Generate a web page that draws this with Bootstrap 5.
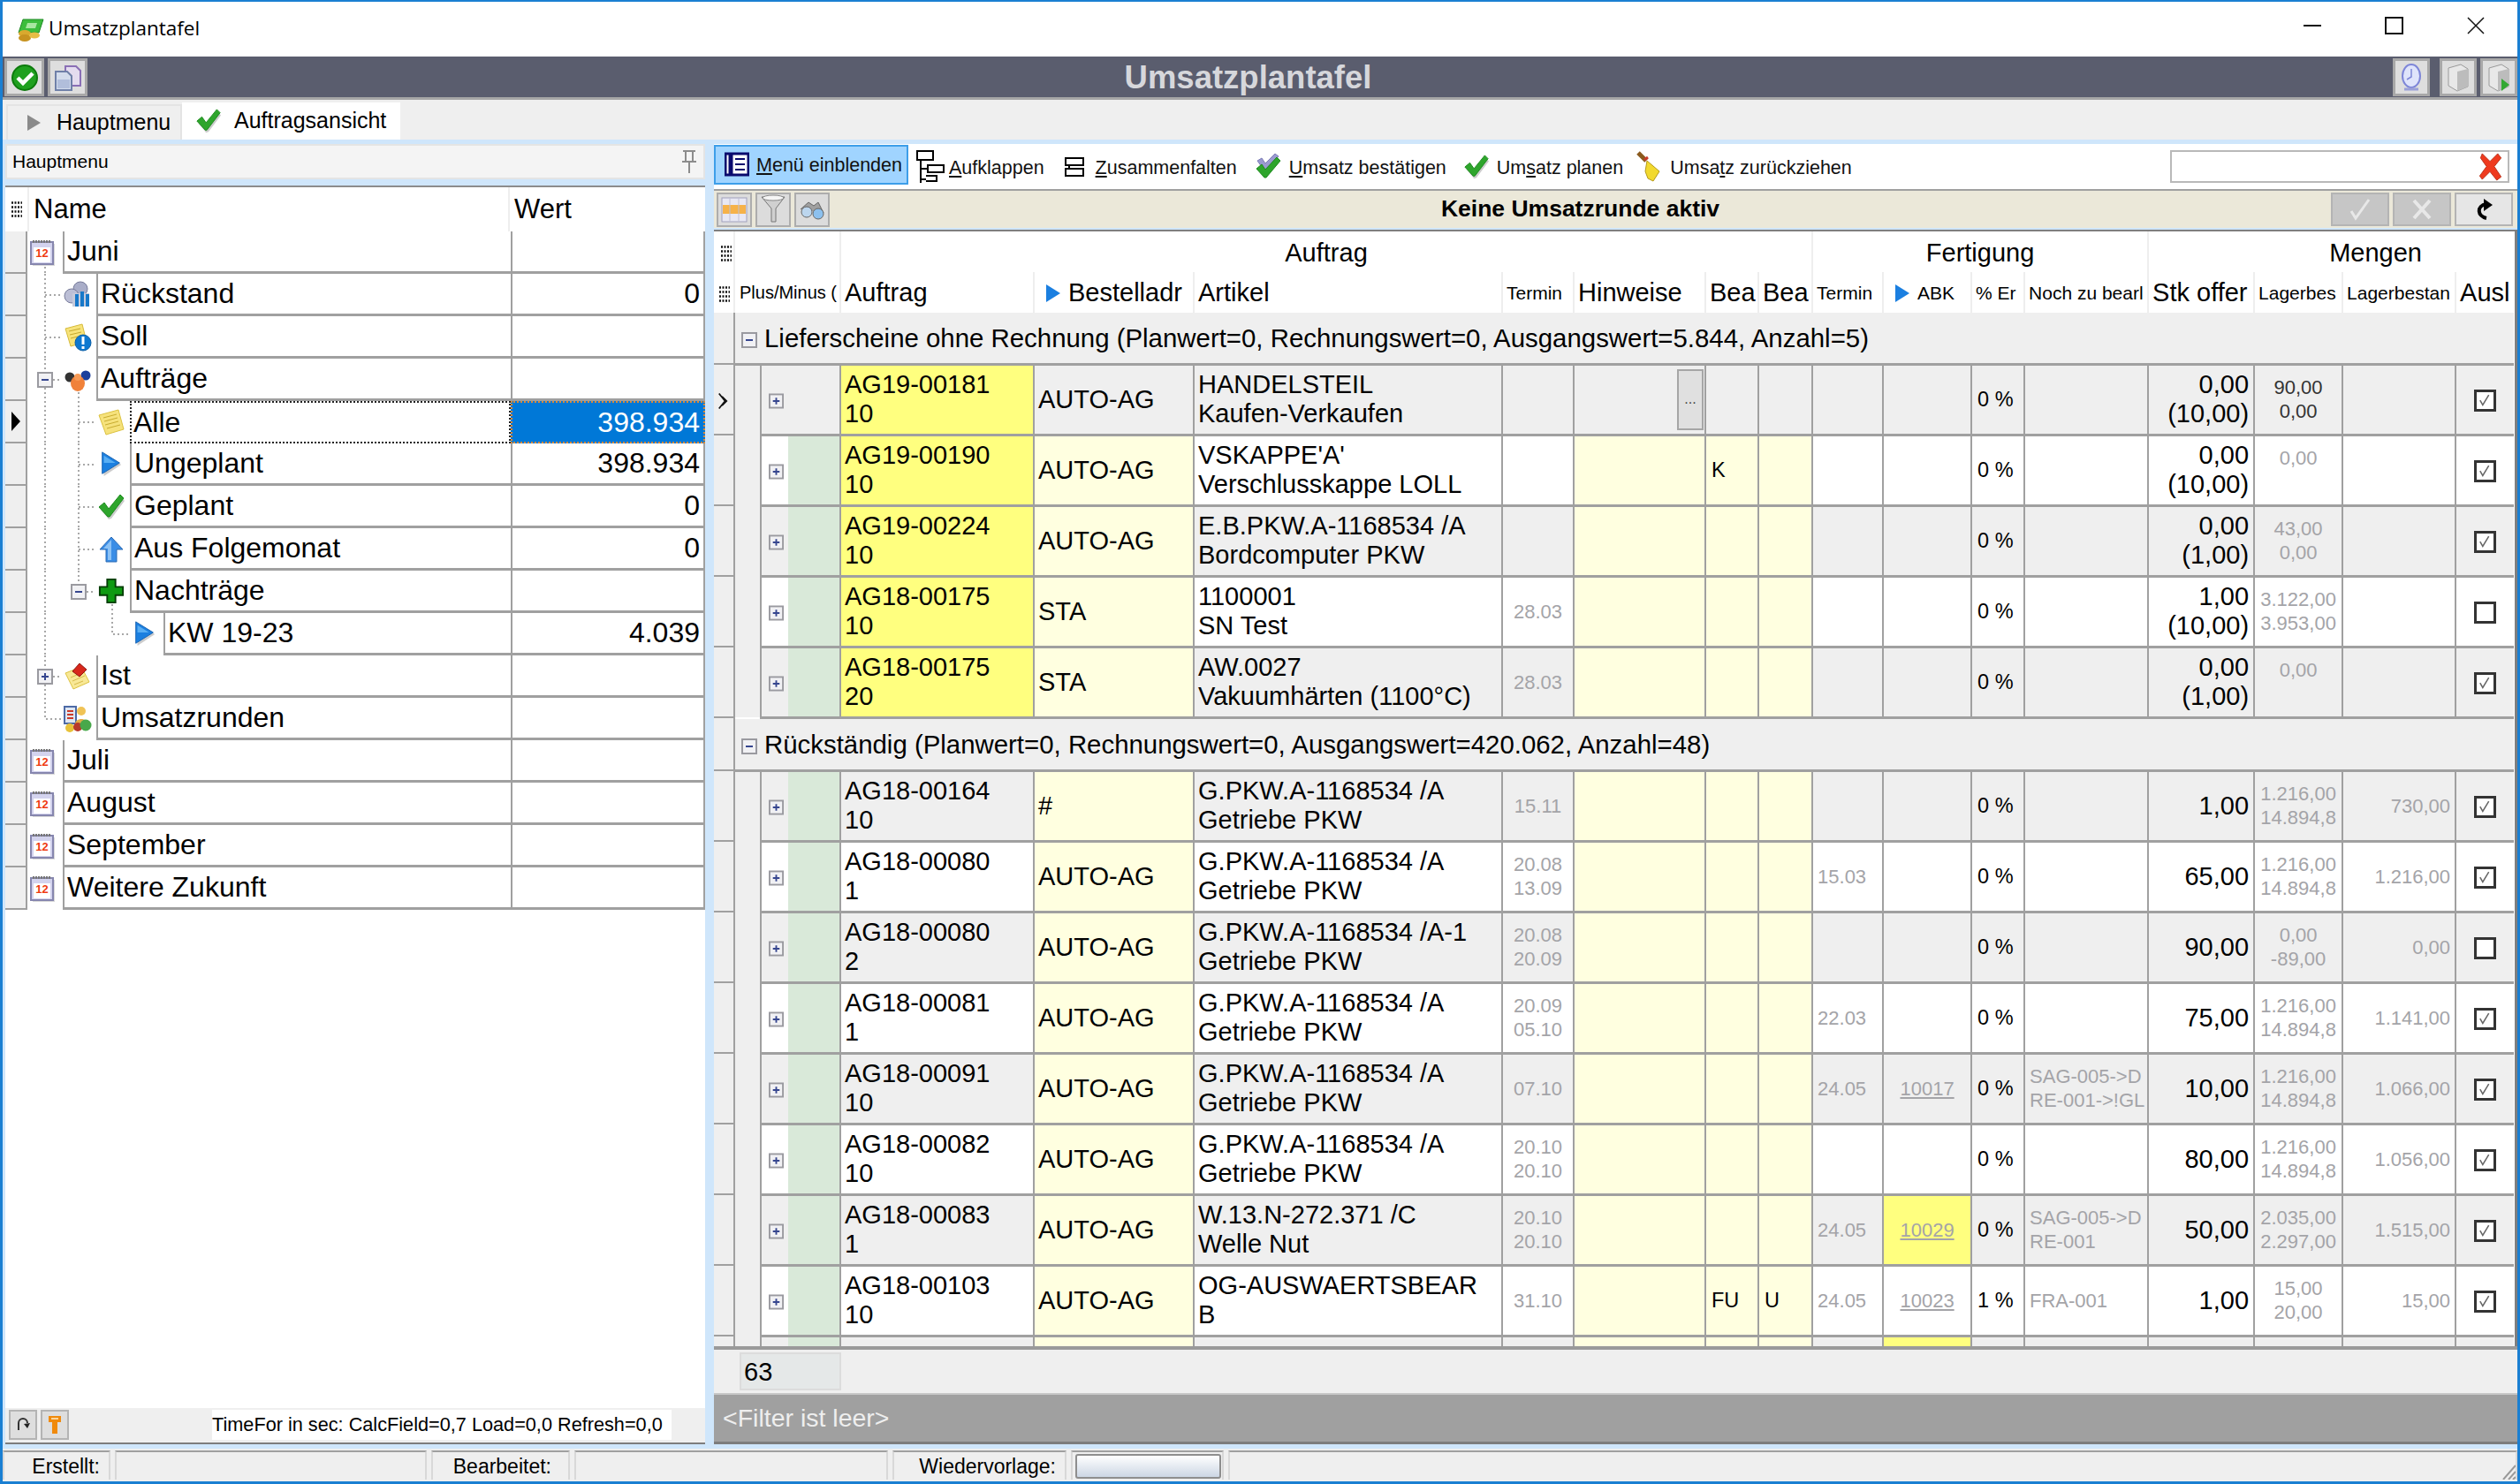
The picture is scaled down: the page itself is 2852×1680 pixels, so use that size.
<!DOCTYPE html>
<html lang="de">
<head>
<meta charset="utf-8">
<title>Umsatzplantafel</title>
<link href="https://cdn.jsdelivr.net/npm/bootstrap@5.3.0/dist/css/bootstrap.min.css" rel="stylesheet">
<style>
html,body{height:100%;margin:0;overflow:hidden;background:#fff}
body{font-family:"Liberation Sans",Arial,sans-serif;color:#000}
.win{height:100vh;border:solid #1a7fd2;border-width:2px 3px 3px 3px}
.titlebar{flex:none;height:62px;background:#fff;font-family:"Open Sans","Liberation Sans",sans-serif;font-size:22.5px}
.titlebar .ttl{margin-left:4px;margin-top:-2px}
.titlebar .wc{height:40px;margin-top:-8px}
.appbar{flex:none;height:49px;background:#5a5d6e;border-bottom:3px solid #a6a6a6;padding:2px 0 1px 2px}
.appbar .ab{width:45px;height:43px;background:#dedede;border:3px solid #a8a8a8;padding:0;display:flex;align-items:center;justify-content:center}
.appbar .ab.nr{width:42px}
.appbar h1{font-size:36.5px;font-weight:700;color:#d6d7db;margin:0;line-height:43px;padding-left:18px}
.tabsbar{flex:none;height:45px;background:#efefef;padding-left:4px;font-size:25px}
.tabsbar .tb{height:40px;border:2px solid #e4e4e4;border-bottom:0;width:199px;background:#efefef;padding-left:22px;gap:18px}
.tabsbar .tb.on{height:42px;background:#fff;border:0;width:247px;padding-left:15px;gap:14px}
.main{flex:1 1 0;background:#cfe6fb;padding:5px 0 5px 3px;min-height:0}
.lp{width:792px;flex:none}
.lhead{flex:none;height:40px;background:#f4f4f4;border:2px solid #e4e4e4;font-size:21px;padding:0 6px}
.ltree{flex:1 1 0;background:#fff;margin-top:7px;border-top:2px solid #8c8c8c;min-height:0;overflow:hidden}
.thead{height:50px;font-size:31px;line-height:50px}
.thead .c1{width:25px}
.thead .c2{border-left:2px solid #eee;padding-left:5px;width:544px}
.thead .c3{border-left:2px solid #eee;padding-left:5px}
.trow{height:48px;font-size:32px;line-height:45px}
.trow .ti{width:25px;flex:none;background:#efefef;border-bottom:2px solid #a0a0a0;border-right:2px solid #a0a0a0;display:flex;align-items:center;justify-content:center}
.trow .sv{flex:none;display:block}
.trow .nm{flex:1 1 0;min-width:0;border-left:2px solid #a0a0a0;border-bottom:3px solid #a0a0a0;padding-left:3px;white-space:nowrap}
.trow .wt{width:220px;flex:none;border-left:2px solid #a0a0a0;border-right:2px solid #a0a0a0;border-bottom:3px solid #a0a0a0;padding-right:4px;text-align:right}
.trow .nm.sel{border:2px dotted #222;padding-left:2px}
.trow .wt.sel{background:#0078d7;color:#fff;border:2px dotted #d98a3a}
.tl{fill:none;stroke:#a8a8a8;stroke-width:2;stroke-dasharray:2 3}
.lfoot{flex:none;height:41px;background:#efefef;border-bottom:2px solid #7d7d7d;padding:2px 4px;font-size:21.7px;gap:4px}
.lfoot .sb{width:32px;height:34px;background:#dedede;border:2px solid #b4b4b4;padding:0;display:flex;align-items:center;justify-content:center}
.lfoot .tim{margin-left:158px;width:520px;background:#fff;height:34px;line-height:34px;white-space:nowrap;overflow:hidden}
.rp{margin-left:10px;min-width:0}
.tools{flex:none;height:51px;background:#fff;font-size:21.5px;padding-right:9px}
.tools .tbi{display:flex;align-items:center;height:45px;white-space:nowrap;border:0;background:none;padding:0;color:#111;font-size:21.5px}
.tools .tbi span{margin-top:3px}
.tools .tbi.on{background:#a0d4ff;border:2px solid #3d9ee9;width:220px;padding-left:10px;margin-top:-5px}
.tools .srch{width:384px;height:37px;border:2px solid #b9b9b9;background:#fff;padding:0 3px 0 0}
.beige{flex:none;height:44px;background:#ebe8d9;border-top:2px solid #a0a0a0;padding:1px 5px 1px 3px;gap:4px;font-size:26.5px;font-weight:700}
.beige .bb{width:40px;height:39px;background:#dcdcdc;border:2px solid #adadad;padding:0;display:flex;align-items:center;justify-content:center}
.beige .br{width:66px;height:38px;background:#c6c6c6;border:2px solid #b4b4b4;padding:0;display:flex;align-items:center;justify-content:center}
.beige .br.act{background:#e6e6e6}
.beige .lbl{flex:1 1 0;text-align:center}
.gwrap{flex:1 1 0;background:#fff;border-top:2px solid #7f7f7f;border-right:3px solid #7f7f7f;margin-top:2px;min-height:0;overflow:hidden}
.grid.table{table-layout:fixed;width:2037px;margin:0;border-collapse:collapse;font-size:29px;--bs-table-bg:transparent}
.grid.table>:not(caption)>*>*{padding:0 4px;border:0;box-shadow:none;white-space:nowrap;overflow:hidden;vertical-align:middle;line-height:33px;background:#fff;color:#000}
.grid.table tr.hr1 th,.grid.table tr.hr2 th{font-weight:400;border-left:2px solid #eee;height:46px;background:#fff}
.grid.table tr.hr1 th{text-align:center;padding-top:2px}
.grid.table tr.hr1 th.lt,.grid.table tr.hr2 th.lt{border-left:0;padding:0 0 0 6px}
.grid.table tr.hr2 th.sm{font-size:21px}
.grid.table tr.hr2 th.pm{font-size:20px;padding-left:5px}
.grid.table tr.gr td{height:58px;background:#efefef;padding:0}
.grid.table tr.gr.gr2 td{height:60px}
.grid.table tr.r td{height:80px;border-left:2px solid #a0a0a0;border-bottom:3px solid #a0a0a0}
.grid.table tr.gr td.ind,.grid.table tr.r td.ind{background:#efefef;padding:0;border-left:0;border-bottom:2px solid #a0a0a0}
.grid.table tr.r td.ind2{background:#efefef;padding:0;border-left:2px solid #a0a0a0;border-bottom:0}
.grid.table tr.gr td.band{padding-left:5px;border-left:2px solid #a0a0a0;border-bottom:3px solid #a0a0a0;font-size:29.4px}
.grid.table tr.r td.px{padding:0 0 0 8px;border-right:0}
.grid.table tr.r.a td{background:#efefef}
.grid.table tr.r td.g{background:#d9e9d9;border-left:0}
.grid.table tr.r td.n{border-left:0}
.grid.table tr.r td.y{background:#ffff7f}
.grid.table tr.r td.p{background:#ffffe0}
.grid.table tr.r td.s{font-size:22px;line-height:27px;color:#a4a4a8;text-align:center;padding:0}
.grid.table tr.r td.sl{text-align:left;padding-left:5px}
.grid.table tr.r td.sr{text-align:right;padding-right:5px;font-size:22px;color:#a4a4a8}
.grid.table tr.r td.dk{color:#333}
.grid.table tr.r td.pc{font-size:23.5px;padding-left:6px}
.grid.table tr.r td.q{text-align:right;padding-right:5px}
.grid.table tr.r td.ck{text-align:center;padding:0}
.form-check-input.cb{width:25px;height:25px;margin:0;border:3px solid #333;border-radius:0;background-color:#fff;vertical-align:middle;float:none;opacity:1}
.form-check-input.cb:checked{background-color:#fff;border-color:#333;background-image:url("data:image/svg+xml,%3csvg xmlns='http://www.w3.org/2000/svg' viewBox='0 0 25 25'%3e%3cpath d='M5 12l4 7L18 4' fill='none' stroke='%23666' stroke-width='2'/%3e%3c/svg%3e")}
.dots{width:30px;height:69px;background:#e0e0e0;border:2px solid #a6a6a6;padding:0;font-size:16px;line-height:60px;display:block;margin-left:112px;color:#444}
.gfoot{flex:none;height:53px;background:#efefef;border-top:4px solid #9a9a9a;padding:3px 0 3px 29px;font-size:29px}
.gfoot .cnt{width:115px;background:#e5e8e8;border:2px solid #dcdcdc;padding-left:3px;line-height:40px}
.gfilt{flex:none;height:58px;background:#a0a0a0;border-top:2px solid #c8c8c8;border-bottom:3px solid #7d7d7d;color:#eee;font-size:28.5px;padding-left:10px;line-height:52px}
.status{flex:none;height:37px;background:#efefef;font-size:23px;padding-top:2px;gap:5px}
.status>div{height:33px;border-top:2px solid #a0a0a0;border-left:2px solid #d8d8d8;border-right:2px solid #d8d8d8;line-height:32px;text-align:right;padding-right:10px;white-space:nowrap}
.status>div.pr21{padding-right:19px}
.status .prog{width:165px;height:28px;margin:2px 3px;background:linear-gradient(#fff,#ccd6e4);border:2px solid #8e8e8e;border-radius:3px}
</style>
</head>
<body>
<svg width="0" height="0" class="position-absolute">
<defs>
<symbol id="check" viewBox="0 0 32 32"><path d="M4 19l6-5 5 6L27 5l4 4-15 20-3 1z" fill="#000" opacity=".2"/><path d="M2 16l6-5 5 7L26 2l4 4-16 21h-2z" fill="#2ea52c" stroke="#1c8a1d"/></symbol>
<symbol id="check2" viewBox="0 0 32 32"><path d="M4 9l5-3 4 6L24 1l4 3-14 16h-2z" fill="#9a9ad0" stroke="#7c7cb8"/><path d="M3 18l6-5 4 6L26 5l4 4-16 19h-2z" fill="#2ea52c" stroke="#1c8a1d"/></symbol>
<symbol id="okc" viewBox="0 0 32 32"><circle cx="16" cy="16" r="14" fill="#1fa01f" stroke="#0d7a0d" stroke-width="2"/><path d="M8 16l6 6 11-11" fill="none" stroke="#fff" stroke-width="4.5"/></symbol>
<symbol id="docs" viewBox="0 0 32 32"><path d="M13 3h12l5 5v17H13z" fill="#e4dcef" stroke="#8a6fb5" stroke-width="2"/><path d="M2 9h13l5 5v16H2z" fill="#d3dcec" stroke="#6f80a8" stroke-width="2"/><rect x="4" y="18" width="14" height="10" fill="#b1bedb"/></symbol>
<symbol id="cal" viewBox="0 0 32 32"><rect x="4" y="6" width="25" height="25" fill="#000" opacity=".15"/><rect x="2" y="4" width="25" height="25" fill="#d3d3ee" stroke="#8686ae" stroke-width="2"/><rect x="5" y="10" width="19" height="17" fill="#fff"/><path d="M4 3.500h21" stroke="#777" stroke-width="3" stroke-dasharray="2 1"/><text x="14.500" y="21" font-size="13" font-weight="700" text-anchor="middle" fill="#ef3b10" font-family="Liberation Sans,sans-serif">12</text></symbol>
<symbol id="gear" viewBox="0 0 32 32"><circle cx="19" cy="9" r="8" fill="#a9adc8" stroke="#777b9a"/><circle cx="9" cy="17" r="8" fill="#bcbfd6" stroke="#777b9a"/><rect x="10" y="14" width="19" height="15" fill="#c6cadb"/><rect x="13" y="15" width="4" height="14" fill="#1778c9"/><rect x="19" y="12" width="4" height="17" fill="#1778c9"/><rect x="25" y="15" width="4" height="14" fill="#1778c9"/></symbol>
<symbol id="noteinfo" viewBox="0 0 32 32"><path d="M2 6L21 1l5 20-18 5z" fill="#f7e37a" stroke="#d6bb3c"/><path d="M6 9l13-3M7 13l13-3M8 17l8-2" stroke="#c5a82d"/><circle cx="22" cy="22" r="9" fill="#0d78d0" stroke="#0a5ea6"/><rect x="20.500" y="15" width="3" height="9" fill="#fff"/><rect x="20.500" y="26" width="3" height="3" fill="#fff"/></symbol>
<symbol id="people" viewBox="0 0 32 32"><circle cx="7" cy="13" r="5.500" fill="#333"/><circle cx="25" cy="11" r="5.500" fill="#1b3f9c"/><ellipse cx="16" cy="20" rx="8" ry="9" fill="#f0813a"/><circle cx="16" cy="13" r="4" fill="#f79a55"/></symbol>
<symbol id="note" viewBox="0 0 32 32"><path d="M2 8L24 2l6 22-20 6z" fill="#f6e27c" stroke="#dcc23f"/><path d="M7 11l15-4M8 15l15-4M9 19l15-4M11 23l15-4" stroke="#c8ac30"/></symbol>
<symbol id="play" viewBox="0 0 32 32"><path d="M7 4l21 13L7 31z" fill="#000" opacity=".2"/><path d="M5 2l21 13L5 28z" fill="#1b7fe0" stroke="#1561b0"/><path d="M7 6l14 9-14 0z" fill="#59aef3"/></symbol>
<symbol id="up" viewBox="0 0 32 32"><path d="M16 2l13 14h-7v14H10V16H3z" fill="#3a8de6" stroke="#2a6ab4"/><path d="M16 5l-9 10h5v13h4z" fill="#8cc2f5"/></symbol>
<symbol id="pl" viewBox="0 0 32 32"><path d="M11 2h10v9h9v10h-9v9H11v-9H2V11h9z" fill="#0f9a12" stroke="#043d05" stroke-width="2"/></symbol>
<symbol id="pin" viewBox="0 0 32 32"><path d="M2 12L20 5l9 17-18 8z" fill="#f8e896" stroke="#dcc23f"/><path d="M8 17l14-6M10 21l14-6M12 25l10-4" stroke="#d6b94a"/><path d="M10 10l8-9 8 7-8 8z" fill="#d8271b" stroke="#8e1610"/></symbol>
<symbol id="users" viewBox="0 0 32 32"><rect x="1" y="2" width="13" height="19" fill="#dfe6f2" stroke="#4d6aa6" stroke-width="2"/><path d="M4 7h7M4 11h7M4 15h7" stroke="#cc3a2a" stroke-width="2"/><circle cx="20" cy="7" r="5" fill="#f0c356"/><path d="M13 22c0-8 14-8 14 0z" fill="#e2ab46"/><circle cx="7" cy="26" r="5" fill="#e8c23a"/><circle cx="16" cy="25" r="5" fill="#b7382a"/><circle cx="25" cy="23" r="6.500" fill="#48a84a"/></symbol>
<symbol id="coin" viewBox="0 0 32 32"><path d="M7 5h23l-5 15H2z" fill="#3cbd3c" stroke="#1f8a25"/><path d="M12 9h11l-2 6H10z" fill="#a8e6a0"/><ellipse cx="9" cy="21" rx="7" ry="4" fill="#d9a92e"/><ellipse cx="9" cy="26" rx="7" ry="4" fill="#c79320"/><ellipse cx="20" cy="23" rx="6" ry="3.500" fill="#e6bd44"/></symbol>
<symbol id="grip" viewBox="0 0 12 18"><path d="M0 1.500h12M0 6.500h12M0 11.500h12M0 16.500h12" stroke="#111" stroke-width="2.500" stroke-dasharray="2 1.500"/></symbol>
<symbol id="minusb" viewBox="0 0 18 18"><rect x="1" y="1" width="16" height="16" fill="#f1f1f4" stroke="#9a9aa0" stroke-width="2"/><path d="M5 9h8" stroke="#36468f" stroke-width="2"/></symbol>
<symbol id="plusb" viewBox="0 0 18 18"><rect x="1" y="1" width="16" height="16" fill="#f1f1f4" stroke="#9a9aa0" stroke-width="2"/><path d="M5 9h8M9 5v8" stroke="#36468f" stroke-width="2"/></symbol>
</defs>
</svg>

<div class="win d-flex flex-column">
  <div class="titlebar d-flex align-items-center">
    <svg width="32" height="32" class="ms-3"><use href="#coin"/></svg>
    <span class="ttl">Umsatzplantafel</span>
    <div class="wc ms-auto d-flex align-items-center">
      <svg width="254" height="24" viewBox="0 0 254 24" style="margin-right:4px"><path d="M16 12h20" stroke="#111" stroke-width="2"/><rect x="109" y="3" width="19" height="18" fill="none" stroke="#111" stroke-width="2"/><path d="M202 3l18 18M220 3l-18 18" stroke="#111" stroke-width="1.500"/></svg>
    </div>
  </div>

  <div class="appbar d-flex align-items-center">
    <button class="ab" type="button"><svg width="32" height="32"><use href="#okc"/></svg></button>
    <button class="ab ms-1" type="button"><svg width="32" height="32"><use href="#docs"/></svg></button>
    <h1 class="flex-grow-1 text-center">Umsatzplantafel</h1>
    <button class="ab nr" type="button"><svg width="28" height="32" viewBox="0 0 28 32"><ellipse cx="14" cy="14" rx="10" ry="13" fill="#dfe4fb" stroke="#7e86d8" stroke-width="2"/><path d="M14 6v9l-5 3" fill="none" stroke="#7e86d8" stroke-width="1.500"/><path d="M6 29h16" stroke="#9aa0d8" stroke-width="3"/></svg></button>
    <button class="ab nr" style="margin-left:11px" type="button"><svg width="30" height="34" viewBox="0 0 30 34"><path d="M4 6l14-4 8 5v20l-12 5-10-6z" fill="#e8e8e8" stroke="#9a9a9a"/><path d="M14 10v22l12-5V7z" fill="#bcbcbc"/></svg></button>
    <button class="ab nr ms-1" type="button"><svg width="30" height="34" viewBox="0 0 30 34"><path d="M4 6l14-4 8 5v20l-12 5-10-6z" fill="#e8e8e8" stroke="#9a9a9a"/><path d="M14 10v22l12-5V7z" fill="#bcbcbc"/><path d="M18 18l9 7-9 7z" fill="#33a833"/></svg></button>
  </div>

  <div class="tabsbar d-flex align-items-end">
    <div class="tb d-flex align-items-center"><svg width="15" height="18" viewBox="0 0 15 18"><path d="M0 0l15 9-15 9z" fill="#8a8a8a"/></svg><span>Hauptmenu</span></div>
    <div class="tb on d-flex align-items-center"><svg width="30" height="30"><use href="#check"/></svg><span>Auftragsansicht</span></div>
  </div>

  <div class="main d-flex">
    <div class="lp d-flex flex-column">
      <div class="lhead d-flex align-items-center justify-content-between">
        <span>Hauptmenu</span>
        <svg width="20" height="28" viewBox="0 0 20 28"><path d="M3 2h14M6 2v12M14 2v12M2 14h16M10 14v13" fill="none" stroke="#8c8c8c" stroke-width="2"/></svg>
      </div>
      <div class="ltree">
        <div class="thead d-flex">
          <div class="c1 d-flex align-items-center justify-content-center"><svg width="12" height="18"><use href="#grip"/></svg></div>
          <div class="c2">Name</div>
          <div class="c3">Wert</div>
        </div>
        <div class="trow d-flex"><div class="ti"></div><svg class="sv" width="40" height="48"><path class="tl" d="M20 40V48"/><use href="#cal" x="2" y="8" width="32" height="32"/></svg><div class="nm">Juni</div><div class="wt"></div></div>
        <div class="trow d-flex"><div class="ti"></div><svg class="sv" width="78" height="48"><path class="tl" d="M20 0V48M20 24H38"/><use href="#gear" x="41" y="8" width="32" height="32"/></svg><div class="nm">Rückstand</div><div class="wt">0</div></div>
        <div class="trow d-flex"><div class="ti"></div><svg class="sv" width="78" height="48"><path class="tl" d="M20 0V48M20 24H38"/><use href="#noteinfo" x="41" y="8" width="32" height="32"/></svg><div class="nm">Soll</div><div class="wt"></div></div>
        <div class="trow d-flex"><div class="ti"></div><svg class="sv" width="78" height="48"><path class="tl" d="M20 0V15M20 33V48M29 24H38M58 38V48"/><use href="#minusb" x="11" y="15" width="18" height="18"/><use href="#people" x="41" y="8" width="32" height="32"/></svg><div class="nm">Aufträge</div><div class="wt"></div></div>
        <div class="trow d-flex"><div class="ti"><svg width="10" height="22" viewBox="0 0 10 22"><path d="M0 0l10 11L0 22z" fill="#000"/></svg></div><svg class="sv" width="116" height="48"><path class="tl" d="M20 0V48M58 0V48M58 24H76"/><use href="#note" x="79" y="8" width="32" height="32"/></svg><div class="nm sel">Alle</div><div class="wt sel">398.934</div></div>
        <div class="trow d-flex"><div class="ti"></div><svg class="sv" width="116" height="48"><path class="tl" d="M20 0V48M58 0V48M58 24H76"/><use href="#play" x="80" y="8" width="30" height="30"/></svg><div class="nm">Ungeplant</div><div class="wt">398.934</div></div>
        <div class="trow d-flex"><div class="ti"></div><svg class="sv" width="116" height="48"><path class="tl" d="M20 0V48M58 0V48M58 24H76"/><use href="#check" x="79" y="8" width="32" height="32"/></svg><div class="nm">Geplant</div><div class="wt">0</div></div>
        <div class="trow d-flex"><div class="ti"></div><svg class="sv" width="116" height="48"><path class="tl" d="M20 0V48M58 0V48M58 24H76"/><use href="#up" x="79" y="8" width="32" height="32"/></svg><div class="nm">Aus Folgemonat</div><div class="wt">0</div></div>
        <div class="trow d-flex"><div class="ti"></div><svg class="sv" width="116" height="48"><path class="tl" d="M20 0V48M58 0V15M67 24H76M96 38V48"/><use href="#minusb" x="49" y="15" width="18" height="18"/><use href="#pl" x="80" y="8" width="30" height="30"/></svg><div class="nm">Nachträge</div><div class="wt"></div></div>
        <div class="trow d-flex"><div class="ti"></div><svg class="sv" width="154" height="48"><path class="tl" d="M20 0V48M96 0V24H114"/><use href="#play" x="118" y="8" width="30" height="30"/></svg><div class="nm">KW 19-23</div><div class="wt">4.039</div></div>
        <div class="trow d-flex"><div class="ti"></div><svg class="sv" width="78" height="48"><path class="tl" d="M20 0V15M20 33V48M29 24H38"/><use href="#plusb" x="11" y="15" width="18" height="18"/><use href="#pin" x="41" y="8" width="32" height="32"/></svg><div class="nm">Ist</div><div class="wt"></div></div>
        <div class="trow d-flex"><div class="ti"></div><svg class="sv" width="78" height="48"><path class="tl" d="M20 0V24H38"/><use href="#users" x="41" y="8" width="32" height="32"/></svg><div class="nm">Umsatzrunden</div><div class="wt"></div></div>
        <div class="trow d-flex"><div class="ti"></div><svg class="sv" width="40" height="48"><use href="#cal" x="2" y="8" width="32" height="32"/></svg><div class="nm">Juli</div><div class="wt"></div></div>
        <div class="trow d-flex"><div class="ti"></div><svg class="sv" width="40" height="48"><use href="#cal" x="2" y="8" width="32" height="32"/></svg><div class="nm">August</div><div class="wt"></div></div>
        <div class="trow d-flex"><div class="ti"></div><svg class="sv" width="40" height="48"><use href="#cal" x="2" y="8" width="32" height="32"/></svg><div class="nm">September</div><div class="wt"></div></div>
        <div class="trow d-flex"><div class="ti"></div><svg class="sv" width="40" height="48"><use href="#cal" x="2" y="8" width="32" height="32"/></svg><div class="nm">Weitere Zukunft</div><div class="wt"></div></div>
      </div>
      <div class="lfoot d-flex">
        <button class="sb" type="button"><svg width="18" height="18" viewBox="0 0 18 18"><path d="M4 15V7a5 5 0 0 1 10 0" fill="none" stroke="#333" stroke-width="2"/><path d="M10 8l4 5 3-6z" fill="#222"/></svg></button>
        <button class="sb" type="button"><svg width="16" height="24" viewBox="0 0 16 24"><path d="M1 2h14v7h-4v13H5V9H1z" fill="#f08a0c"/><rect x="4" y="4" width="8" height="2" fill="#fbd59c"/></svg></button>
        <div class="tim">TimeFor in sec: CalcField=0,7 Load=0,0 Refresh=0,0</div>
      </div>
    </div>

    <div class="rp d-flex flex-column flex-grow-1">
      <div class="tools d-flex align-items-center">
        <button class="tbi on" type="button"><svg width="28" height="28" viewBox="0 0 28 28" class="me-2"><rect x="1" y="2" width="26" height="24" fill="#fff" stroke="#0a0a6e" stroke-width="3"/><path d="M7 3v22" stroke="#0a0a6e" stroke-width="5"/><path d="M12 8h11M12 14h11M12 20h11M5 8h3M5 14h3M5 20h3" stroke="#0a0a6e" stroke-width="2"/></svg><span><u>M</u>enü einblenden</span></button>
        <button class="tbi ms-2" type="button"><svg width="34" height="40" viewBox="0 0 34 40" class="me-1"><path d="M2 2h18v10H2zM14 18h18v8H14zM6 12v26M6 22h8M6 34h6M12 30h12v6H12" fill="none" stroke="#000" stroke-width="2"/></svg><span><u>A</u>ufklappen</span></button>
        <button class="tbi" style="margin-left:22px" type="button"><svg width="24" height="24" viewBox="0 0 24 24" class="me-2"><path d="M2 2h20v8H2zM2 14h20v8H2zM6 10v4" fill="none" stroke="#000" stroke-width="2"/></svg><span class="ms-1"><u>Z</u>usammenfalten</span></button>
        <button class="tbi" style="margin-left:19px" type="button"><svg width="32" height="36" viewBox="0 0 32 32" class="me-1"><use href="#check2"/></svg><span class="ms-1"><u>U</u>msatz bestätigen</span></button>
        <button class="tbi" style="margin-left:19px" type="button"><svg width="30" height="30" viewBox="0 0 32 32" class="me-2"><use href="#check"/></svg><span>Um<u>s</u>atz planen</span></button>
        <button class="tbi" style="margin-left:13px" type="button"><svg width="36" height="38" viewBox="0 0 36 38" class="me-1"><path d="M4 3l9 9" stroke="#8a5a1e" stroke-width="5"/><path d="M11 11l4-3" stroke="#c73a2a" stroke-width="3"/><path d="M14 12l14 12-7 11-6-3-3-8z" fill="#f2d92e" stroke="#b59a1a"/></svg><span>Umsa<u>t</u>z zurückziehen</span></button>
        <div class="ms-auto srch d-flex justify-content-end align-items-center"><svg width="32" height="33" viewBox="0 0 28 34"><path d="M4 2l9 9 9-9 4 5-8 10 8 12-5 4-8-10-9 9-3-4 8-11L2 7z" fill="#ef3a1e" stroke="#b9331a"/></svg></div>
      </div>
      <div class="beige d-flex align-items-center">
        <button class="bb" type="button"><svg width="32" height="32" viewBox="0 0 32 32"><rect x="2" y="3" width="28" height="27" fill="#e8e8f4" stroke="#a0a0bc"/><rect x="3" y="11" width="26" height="10" fill="#f6b24a"/><path d="M11 3v27M21 3v27" stroke="#c0c0d4"/></svg></button>
        <button class="bb" type="button"><svg width="30" height="34" viewBox="0 0 30 34"><path d="M2 3h26L18 16v15h-5V16z" fill="#d0d0d0" stroke="#777"/><ellipse cx="15" cy="4" rx="12" ry="3" fill="#f5f5f5" stroke="#888"/></svg></button>
        <button class="bb" type="button"><svg width="30" height="24" viewBox="0 0 30 24"><path d="M2 12l9-8 6 4 5-4 6 12" fill="#a0a0a0" stroke="#666"/><circle cx="9" cy="15" r="6" fill="#bcd6ee" stroke="#666"/><circle cx="22" cy="17" r="6" fill="#8cc0ee" stroke="#666"/></svg></button>
        <div class="lbl">Keine Umsatzrunde aktiv</div>
        <button class="br" type="button"><svg width="24" height="26" viewBox="0 0 24 26"><path d="M2 15l5 8L22 2" fill="none" stroke="#e8e8e8" stroke-width="3"/></svg></button>
        <button class="br" type="button"><svg width="24" height="26" viewBox="0 0 24 26"><path d="M3 3l18 20M21 3L3 23" fill="none" stroke="#e8e8e8" stroke-width="4"/></svg></button>
        <button class="br act" type="button"><svg width="22" height="24" viewBox="0 0 22 24"><path d="M14 22C4 20 2 8 14 6" fill="none" stroke="#000" stroke-width="4"/><path d="M11 0l10 7-10 7z" fill="#000"/></svg></button>
      </div>
      <div class="gwrap">
        <table class="table grid">
          <colgroup><col style="width:23px"><col style="width:30px"><col style="width:31px"><col style="width:59px"><col style="width:219px"><col style="width:181px"><col style="width:349px"><col style="width:81px"><col style="width:149px"><col style="width:60px"><col style="width:61px"><col style="width:80px"><col style="width:100px"><col style="width:60px"><col style="width:140px"><col style="width:120px"><col style="width:100px"><col style="width:128px"><col style="width:66px"></colgroup>
          <thead>
            <tr class="hr1">
              <th class="lt"><svg width="12" height="18"><use href="#grip"/></svg></th>
              <th colspan="3"></th>
              <th colspan="7">Auftrag</th>
              <th colspan="4">Fertigung</th>
              <th colspan="4" style="padding-left:104px">Mengen</th>
            </tr>
            <tr class="hr2">
              <th class="lt"><svg width="12" height="18"><use href="#grip"/></svg></th>
              <th colspan="3" class="pm">Plus/Minus (</th>
              <th>Auftrag</th>
              <th style="padding-left:12px"><svg width="18" height="24" viewBox="0 0 18 24" class="me-2" style="vertical-align:-3px"><path d="M1 2l16 10L1 22z" fill="#1b7fe0"/></svg>Bestelladr</th>
              <th>Artikel</th>
              <th class="sm">Termin</th>
              <th>Hinweise</th>
              <th>Bea</th>
              <th>Bea</th>
              <th class="sm">Termin</th>
              <th class="sm" style="padding-left:12px"><svg width="18" height="24" viewBox="0 0 18 24" class="me-2" style="vertical-align:-5px"><path d="M1 2l16 10L1 22z" fill="#1b7fe0"/></svg>ABK</th>
              <th class="sm">% Er</th>
              <th class="sm">Noch zu bearl</th>
              <th>Stk offer</th>
              <th class="sm">Lagerbes</th>
              <th class="sm">Lagerbestan</th>
              <th>Ausl</th>
            </tr>
          </thead>
          <tbody>
            <tr class="gr"><td class="ind"></td><td colspan="18" class="band"><svg width="18" height="18" class="me-2" style="margin-left:2px"><use href="#minusb"/></svg>Lieferscheine ohne Rechnung (Planwert=0, Rechnungswert=0, Ausgangswert=5.844, Anzahl=5)</td></tr>
            <tr class="r a"><td class="ind"><svg width="12" height="22" viewBox="0 0 14 24" class="ms-1"><path d="M2 2l8 10-8 10M6 6l6 6-6 6" fill="none" stroke="#111" stroke-width="2"/></svg></td><td class="ind2"></td><td class="px"><svg width="17" height="18"><use href="#plusb"/></svg></td><td class="n"></td><td class="y">AG19-00181<br>10</td><td>AUTO-AG</td><td>HANDELSTEIL<br>Kaufen-Verkaufen</td><td></td><td class="p0"><button class="dots" type="button">...</button></td><td></td><td></td><td></td><td></td><td class="pc">0 %</td><td></td><td class="q">0,00<br>(10,00)</td><td class="s dk">90,00<br>0,00</td><td></td><td class="ck"><input class="form-check-input cb" type="checkbox" checked aria-label="Ausl"></td></tr>
            <tr class="r"><td class="ind"></td><td class="ind2"></td><td class="px"><svg width="17" height="18"><use href="#plusb"/></svg></td><td class="g"></td><td class="y">AG19-00190<br>10</td><td class="p">AUTO-AG</td><td>VSKAPPE'A'<br>Verschlusskappe LOLL</td><td></td><td class="p"></td><td class="p pc">K</td><td class="p"></td><td></td><td></td><td class="pc">0 %</td><td></td><td class="q">0,00<br>(10,00)</td><td class="s">0,00<br>&nbsp;</td><td></td><td class="ck"><input class="form-check-input cb" type="checkbox" checked aria-label="Ausl"></td></tr>
            <tr class="r a"><td class="ind"></td><td class="ind2"></td><td class="px"><svg width="17" height="18"><use href="#plusb"/></svg></td><td class="g"></td><td class="y">AG19-00224<br>10</td><td class="p">AUTO-AG</td><td>E.B.PKW.A-1168534 /A<br>Bordcomputer PKW</td><td></td><td class="p"></td><td class="p"></td><td class="p"></td><td></td><td></td><td class="pc">0 %</td><td></td><td class="q">0,00<br>(1,00)</td><td class="s">43,00<br>0,00</td><td></td><td class="ck"><input class="form-check-input cb" type="checkbox" checked aria-label="Ausl"></td></tr>
            <tr class="r"><td class="ind"></td><td class="ind2"></td><td class="px"><svg width="17" height="18"><use href="#plusb"/></svg></td><td class="g"></td><td class="y">AG18-00175<br>10</td><td class="p">STA</td><td>1100001<br>SN Test</td><td class="s">28.03</td><td class="p"></td><td class="p"></td><td class="p"></td><td></td><td></td><td class="pc">0 %</td><td></td><td class="q">1,00<br>(10,00)</td><td class="s">3.122,00<br>3.953,00</td><td></td><td class="ck"><input class="form-check-input cb" type="checkbox" aria-label="Ausl"></td></tr>
            <tr class="r a"><td class="ind"></td><td class="ind2"></td><td class="px"><svg width="17" height="18"><use href="#plusb"/></svg></td><td class="g"></td><td class="y">AG18-00175<br>20</td><td class="p">STA</td><td>AW.0027<br>Vakuumhärten (1100°C)</td><td class="s">28.03</td><td class="p"></td><td class="p"></td><td class="p"></td><td></td><td></td><td class="pc">0 %</td><td></td><td class="q">0,00<br>(1,00)</td><td class="s">0,00<br>&nbsp;</td><td></td><td class="ck"><input class="form-check-input cb" type="checkbox" checked aria-label="Ausl"></td></tr>

            <tr class="gr gr2"><td class="ind"></td><td colspan="18" class="band"><svg width="18" height="18" class="me-2" style="margin-left:2px"><use href="#minusb"/></svg>Rückständig (Planwert=0, Rechnungswert=0, Ausgangswert=420.062, Anzahl=48)</td></tr>
            <tr class="r a"><td class="ind"></td><td class="ind2"></td><td class="px"><svg width="17" height="18"><use href="#plusb"/></svg></td><td class="g"></td><td>AG18-00164<br>10</td><td class="p">#</td><td>G.PKW.A-1168534 /A<br>Getriebe PKW</td><td class="s">15.11</td><td class="p"></td><td class="p"></td><td class="p"></td><td></td><td></td><td class="pc">0 %</td><td></td><td class="q">1,00</td><td class="s">1.216,00<br>14.894,8</td><td class="sr">730,00</td><td class="ck"><input class="form-check-input cb" type="checkbox" checked aria-label="Ausl"></td></tr>
            <tr class="r"><td class="ind"></td><td class="ind2"></td><td class="px"><svg width="17" height="18"><use href="#plusb"/></svg></td><td class="g"></td><td>AG18-00080<br>1</td><td class="p">AUTO-AG</td><td>G.PKW.A-1168534 /A<br>Getriebe PKW</td><td class="s">20.08<br>13.09</td><td class="p"></td><td class="p"></td><td class="p"></td><td class="s sl">15.03</td><td></td><td class="pc">0 %</td><td></td><td class="q">65,00</td><td class="s">1.216,00<br>14.894,8</td><td class="sr">1.216,00</td><td class="ck"><input class="form-check-input cb" type="checkbox" checked aria-label="Ausl"></td></tr>
            <tr class="r a"><td class="ind"></td><td class="ind2"></td><td class="px"><svg width="17" height="18"><use href="#plusb"/></svg></td><td class="g"></td><td>AG18-00080<br>2</td><td class="p">AUTO-AG</td><td>G.PKW.A-1168534 /A-1<br>Getriebe PKW</td><td class="s">20.08<br>20.09</td><td class="p"></td><td class="p"></td><td class="p"></td><td></td><td></td><td class="pc">0 %</td><td></td><td class="q">90,00</td><td class="s">0,00<br>-89,00</td><td class="sr">0,00</td><td class="ck"><input class="form-check-input cb" type="checkbox" aria-label="Ausl"></td></tr>
            <tr class="r"><td class="ind"></td><td class="ind2"></td><td class="px"><svg width="17" height="18"><use href="#plusb"/></svg></td><td class="g"></td><td>AG18-00081<br>1</td><td class="p">AUTO-AG</td><td>G.PKW.A-1168534 /A<br>Getriebe PKW</td><td class="s">20.09<br>05.10</td><td class="p"></td><td class="p"></td><td class="p"></td><td class="s sl">22.03</td><td></td><td class="pc">0 %</td><td></td><td class="q">75,00</td><td class="s">1.216,00<br>14.894,8</td><td class="sr">1.141,00</td><td class="ck"><input class="form-check-input cb" type="checkbox" checked aria-label="Ausl"></td></tr>
            <tr class="r a"><td class="ind"></td><td class="ind2"></td><td class="px"><svg width="17" height="18"><use href="#plusb"/></svg></td><td class="g"></td><td>AG18-00091<br>10</td><td class="p">AUTO-AG</td><td>G.PKW.A-1168534 /A<br>Getriebe PKW</td><td class="s">07.10</td><td class="p"></td><td class="p"></td><td class="p"></td><td class="s sl">24.05</td><td class="s"><u>10017</u></td><td class="pc">0 %</td><td class="s sl">SAG-005-&gt;D<br>RE-001-&gt;!GL</td><td class="q">10,00</td><td class="s">1.216,00<br>14.894,8</td><td class="sr">1.066,00</td><td class="ck"><input class="form-check-input cb" type="checkbox" checked aria-label="Ausl"></td></tr>
            <tr class="r"><td class="ind"></td><td class="ind2"></td><td class="px"><svg width="17" height="18"><use href="#plusb"/></svg></td><td class="g"></td><td>AG18-00082<br>10</td><td class="p">AUTO-AG</td><td>G.PKW.A-1168534 /A<br>Getriebe PKW</td><td class="s">20.10<br>20.10</td><td class="p"></td><td class="p"></td><td class="p"></td><td></td><td></td><td class="pc">0 %</td><td></td><td class="q">80,00</td><td class="s">1.216,00<br>14.894,8</td><td class="sr">1.056,00</td><td class="ck"><input class="form-check-input cb" type="checkbox" checked aria-label="Ausl"></td></tr>
            <tr class="r a"><td class="ind"></td><td class="ind2"></td><td class="px"><svg width="17" height="18"><use href="#plusb"/></svg></td><td class="g"></td><td>AG18-00083<br>1</td><td class="p">AUTO-AG</td><td>W.13.N-272.371 /C<br>Welle Nut</td><td class="s">20.10<br>20.10</td><td class="p"></td><td class="p"></td><td class="p"></td><td class="s sl">24.05</td><td class="s y"><u>10029</u></td><td class="pc">0 %</td><td class="s sl">SAG-005-&gt;D<br>RE-001</td><td class="q">50,00</td><td class="s">2.035,00<br>2.297,00</td><td class="sr">1.515,00</td><td class="ck"><input class="form-check-input cb" type="checkbox" checked aria-label="Ausl"></td></tr>
            <tr class="r"><td class="ind"></td><td class="ind2"></td><td class="px"><svg width="17" height="18"><use href="#plusb"/></svg></td><td class="g"></td><td>AG18-00103<br>10</td><td class="p">AUTO-AG</td><td>OG-AUSWAERTSBEAR<br>B</td><td class="s">31.10</td><td class="p"></td><td class="p pc">FU</td><td class="p pc">U</td><td class="s sl">24.05</td><td class="s"><u>10023</u></td><td class="pc">1 %</td><td class="s sl">FRA-001</td><td class="q">1,00</td><td class="s">15,00<br>20,00</td><td class="sr">15,00</td><td class="ck"><input class="form-check-input cb" type="checkbox" checked aria-label="Ausl"></td></tr>
            <tr class="r a"><td class="ind"></td><td class="ind2"></td><td></td><td class="g"></td><td></td><td class="p"></td><td></td><td></td><td class="p"></td><td class="p"></td><td class="p"></td><td></td><td class="y"></td><td></td><td></td><td></td><td></td><td></td><td></td></tr>
          </tbody>
        </table>
      </div>
      <div class="gfoot d-flex"><div class="cnt">63</div></div>
      <div class="gfilt">&lt;Filter ist leer&gt;</div>
    </div>
  </div>

  <div class="status d-flex">
    <div style="width:122px">Erstellt:</div>
    <div style="width:353px"></div>
    <div class="pr21" style="width:157px">Bearbeitet:</div>
    <div style="width:355px"></div>
    <div style="width:197px">Wiedervorlage:</div>
    <div style="width:173px;padding:0"><div class="prog"></div></div>
    <div class="flex-grow-1 d-flex justify-content-end align-items-end" style="padding:0"><svg width="18" height="20" viewBox="0 0 18 20"><path d="M4 20L18 4M10 20L18 11M15 20l3-3" stroke="#999" stroke-width="2"/></svg></div>
  </div>
</div>
</body>
</html>
